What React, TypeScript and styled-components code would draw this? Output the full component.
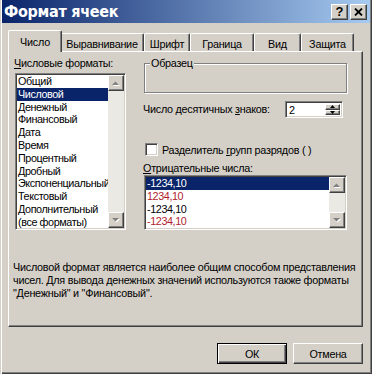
import styled, { createGlobalStyle, css } from 'styled-components';

const GlobalStyle = createGlobalStyle`
  html, body {
    margin: 0;
    padding: 0;
    background: #d4d0c8;
  }
  body {
    font-family: 'Liberation Sans', Arial, sans-serif;
    font-size: 10.8px;
    letter-spacing: -0.25px;
    color: #000;
  }
`;

const raised = css`
  background: #d4d0c8;
  border: 1px solid;
  border-color: #fff #404040 #404040 #fff;
  box-shadow: inset -1px -1px #808080;
`;

const sunken = css`
  background: #fff;
  border: 1px solid;
  border-color: #808080 #fff #fff #808080;
  box-shadow: inset 1px 1px #404040, inset -1px -1px #d4d0c8;
`;

const Dialog = styled.div`
  width: 372px;
  height: 374px;
  box-sizing: border-box;
  padding: 0 2px 2px 2px;
  background: #d4d0c8;
  box-shadow: inset 1px 0 #d4d0c8, inset 2px 0 #fff, inset -1px -1px #404040,
    inset -2px -2px #808080;
  display: flex;
  flex-direction: column;
`;

const TitleBar = styled.div`
  height: 23px;
  display: flex;
  align-items: center;
  justify-content: space-between;
  padding: 0 3px 0 2px;
  background: linear-gradient(90deg, #0a246a 0%, #a6caf0 100%);
`;

const TitleText = styled.span`
  font-family: 'DejaVu Sans Condensed', 'DejaVu Sans', sans-serif;
  font-weight: bold;
  font-size: 16px;
  color: #fff;
  letter-spacing: -0.3px;
`;

const TitleButtons = styled.div`
  display: flex;
  gap: 2px;
`;

const CaptionButton = styled.div`
  ${raised};
  box-sizing: border-box;
  width: 17px;
  height: 16px;
  display: flex;
  align-items: center;
  justify-content: center;
  font-weight: bold;
  font-size: 13px;
  letter-spacing: 0;
  line-height: 1;
`;

const Body = styled.div`
  flex: 1;
  display: flex;
  flex-direction: column;
  padding: 0 7px 0 6px;
`;

const TabStrip = styled.div`
  display: flex;
  align-items: flex-end;
  height: 20px;
  margin-top: 8px;
  padding-left: 2px;
`;

const Tab = styled.div<{ $w: number; $active?: boolean }>`
  box-sizing: border-box;
  position: relative;
  z-index: ${(p) => (p.$active ? 2 : 0)};
  width: ${(p) => (p.$active ? p.$w + 4 : p.$w)}px;
  height: ${(p) => (p.$active ? 22 : 18)}px;
  margin: 0 ${(p) => (p.$active ? -2 : 0)}px ${(p) => (p.$active ? -1 : 0)}px;
  padding-top: ${(p) => (p.$active ? 1 : 2)}px;
  background: #d4d0c8;
  border-top: 1px solid #fff;
  border-left: 1px solid #fff;
  border-right: 1px solid #404040;
  border-radius: 2px 2px 0 0;
  box-shadow: inset -1px 0 #808080;
  display: flex;
  align-items: center;
  justify-content: center;
  white-space: nowrap;
`;

const Panel = styled.div`
  ${raised};
  position: relative;
  z-index: 1;
  box-sizing: border-box;
  height: 276px;
  padding: 5px 15px 0 6px;
`;

const Columns = styled.div`
  display: grid;
  grid-template-columns: 111px 203px;
  column-gap: 18px;
`;

const Column = styled.div`
  display: flex;
  flex-direction: column;
`;

const Label = styled.div`
  line-height: 13px;
  margin-left: -1px;
  white-space: nowrap;
`;

const ListBox = styled.div<{ $h: number }>`
  ${sunken};
  box-sizing: border-box;
  height: ${(p) => p.$h}px;
  padding: 1px;
  display: flex;
  margin-top: ${(p) => (p.$h > 100 ? 3 : 0)}px;
`;

const Items = styled.div`
  flex: 1;
  min-width: 0;
  overflow: hidden;
`;

const Item = styled.div<{ $selected?: boolean; $red?: boolean }>`
  height: 12.8px;
  line-height: 12.8px;
  padding-left: 1px;
  letter-spacing: -0.4px;
  white-space: nowrap;
  background: ${(p) => (p.$selected ? '#0a246a' : 'transparent')};
  color: ${(p) => (p.$selected ? '#fff' : p.$red ? '#b01e2e' : '#000')};
`;

const ScrollBar = styled.div`
  width: 16px;
  flex: none;
  display: flex;
  flex-direction: column;
`;

const ScrollButton = styled.div`
  ${raised};
  box-sizing: border-box;
  width: 16px;
  height: 16px;
  display: flex;
  align-items: center;
  justify-content: center;
`;

const Track = styled.div`
  flex: 1;
  background: #ebe9e4;
`;

const GroupBox = styled.fieldset`
  box-sizing: border-box;
  height: 36px;
  margin: 0;
  padding: 0;
  border: 1px solid #808080;
  box-shadow: inset 1px 1px #fff, 1px 1px #fff;
  min-width: 0;
`;

const GroupLegend = styled.legend`
  margin-left: 5px;
  padding: 0 1px;
  line-height: 13px;
  background: #d4d0c8;
`;

const DecimalRow = styled.div`
  display: flex;
  align-items: center;
  justify-content: space-between;
  margin-top: 8px;
  padding-right: 4px;
`;

const SpinBox = styled.div`
  ${sunken};
  box-sizing: border-box;
  width: 58px;
  height: 17px;
  padding: 2px 2px 2px 3px;
  display: flex;
  align-items: stretch;
  justify-content: space-between;
`;

const SpinValue = styled.span`
  line-height: 13px;
`;

const SpinButtons = styled.div`
  display: flex;
  flex-direction: column;
  width: 15px;
`;

const SpinButton = styled.div`
  ${raised};
  box-sizing: border-box;
  flex: 1;
  display: flex;
  align-items: center;
  justify-content: center;
`;

const CheckRow = styled.div`
  display: flex;
  align-items: center;
  gap: 4px;
  margin-top: 25px;
  padding-left: 1px;
`;

const CheckBox = styled.div`
  ${sunken};
  box-sizing: border-box;
  width: 13px;
  height: 13px;
`;

const NegLabel = styled(Label)`
  margin-top: 6px;
`;

const Description = styled.div`
  margin: 31px 0 0 -2px;
  line-height: 13.2px;
  white-space: nowrap;
`;

const ButtonRow = styled.div`
  display: flex;
  justify-content: flex-end;
  gap: 6px;
  margin-top: 16px;
`;

const PushButton = styled.button<{ $default?: boolean }>`
  box-sizing: border-box;
  width: 70px;
  height: 21px;
  padding: 0;
  font: inherit;
  letter-spacing: inherit;
  color: #000;
  ${raised};
  ${(p) =>
    p.$default &&
    css`
      border: 1px solid #000;
      box-shadow: inset 1px 1px #fff, inset -1px -1px #404040, inset -2px -2px #808080;
    `}
`;

const Arrow = ({ up, disabled }: { up?: boolean; disabled?: boolean }) => {
  const pts = up ? '0,4 7,4 3.5,0.5' : '0,0 7,0 3.5,3.5';
  return (
    <svg width="8" height="5" viewBox="0 0 8 5">
      {disabled && <polygon points={pts} fill="#fff" transform="translate(1,1)" />}
      <polygon points={pts} fill={disabled ? '#808080' : '#000'} />
    </svg>
  );
};

const SmallArrow = ({ up }: { up?: boolean }) => (
  <svg width="5" height="3" viewBox="0 0 5 3">
    <polygon points={up ? '0,3 5,3 2.5,0' : '0,0 5,0 2.5,3'} fill="#000" />
  </svg>
);

const Scroll = () => (
  <ScrollBar>
    <ScrollButton>
      <Arrow up disabled />
    </ScrollButton>
    <Track />
    <ScrollButton>
      <Arrow disabled />
    </ScrollButton>
  </ScrollBar>
);

const formats = [
  'Общий',
  'Числовой',
  'Денежный',
  'Финансовый',
  'Дата',
  'Время',
  'Процентный',
  'Дробный',
  'Экспоненциальный',
  'Текстовый',
  'Дополнительный',
  '(все форматы)',
];

const negatives = [
  { text: '-1234,10', red: false },
  { text: '1234,10', red: true },
  { text: '-1234,10', red: false },
  { text: '-1234,10', red: true },
];

const tabs = [
  { name: 'Число', w: 50 },
  { name: 'Выравнивание', w: 84 },
  { name: 'Шрифт', w: 46 },
  { name: 'Граница', w: 64 },
  { name: 'Вид', w: 47 },
  { name: 'Защита', w: 53 },
];

const App = () => (
  <>
    <GlobalStyle />
    <Dialog>
      <TitleBar>
        <TitleText>Формат ячеек</TitleText>
        <TitleButtons>
          <CaptionButton>?</CaptionButton>
          <CaptionButton>
            <svg width="9" height="8" viewBox="0 0 9 8">
              <path d="M1 0.5 L8 7.5 M8 0.5 L1 7.5" stroke="#000" strokeWidth="1.8" />
            </svg>
          </CaptionButton>
        </TitleButtons>
      </TitleBar>
      <Body>
        <TabStrip>
          {tabs.map((t, i) => (
            <Tab key={t.name} $w={t.w} $active={i === 0}>
              {t.name}
            </Tab>
          ))}
        </TabStrip>
        <Panel>
          <Columns>
            <Column>
              <Label>
                <u>Ч</u>исловые форматы:
              </Label>
              <ListBox $h={157}>
                <Items>
                  {formats.map((f, i) => (
                    <Item key={f} $selected={i === 1}>
                      {f}
                    </Item>
                  ))}
                </Items>
                <Scroll />
              </ListBox>
            </Column>
            <Column>
              <GroupBox>
                <GroupLegend>Образец</GroupLegend>
              </GroupBox>
              <DecimalRow>
                <Label>
                  Число десятичных <u>з</u>наков:
                </Label>
                <SpinBox>
                  <SpinValue>2</SpinValue>
                  <SpinButtons>
                    <SpinButton>
                      <SmallArrow up />
                    </SpinButton>
                    <SpinButton>
                      <SmallArrow />
                    </SpinButton>
                  </SpinButtons>
                </SpinBox>
              </DecimalRow>
              <CheckRow>
                <CheckBox />
                <span>
                  Разделитель <u>г</u>рупп разрядов ( )
                </span>
              </CheckRow>
              <NegLabel>
                <u>О</u>трицательные числа:
              </NegLabel>
              <ListBox $h={55}>
                <Items>
                  {negatives.map((n, i) => (
                    <Item key={i} $selected={i === 0} $red={n.red}>
                      {n.text}
                    </Item>
                  ))}
                </Items>
                <Scroll />
              </ListBox>
            </Column>
          </Columns>
          <Description>
            Числовой формат является наиболее общим способом представления
            <br />
            чисел. Для вывода денежных значений используются также форматы
            <br />
            "Денежный" и "Финансовый".
          </Description>
        </Panel>
        <ButtonRow>
          <PushButton $default>ОК</PushButton>
          <PushButton>Отмена</PushButton>
        </ButtonRow>
      </Body>
    </Dialog>
  </>
);

export default App;
